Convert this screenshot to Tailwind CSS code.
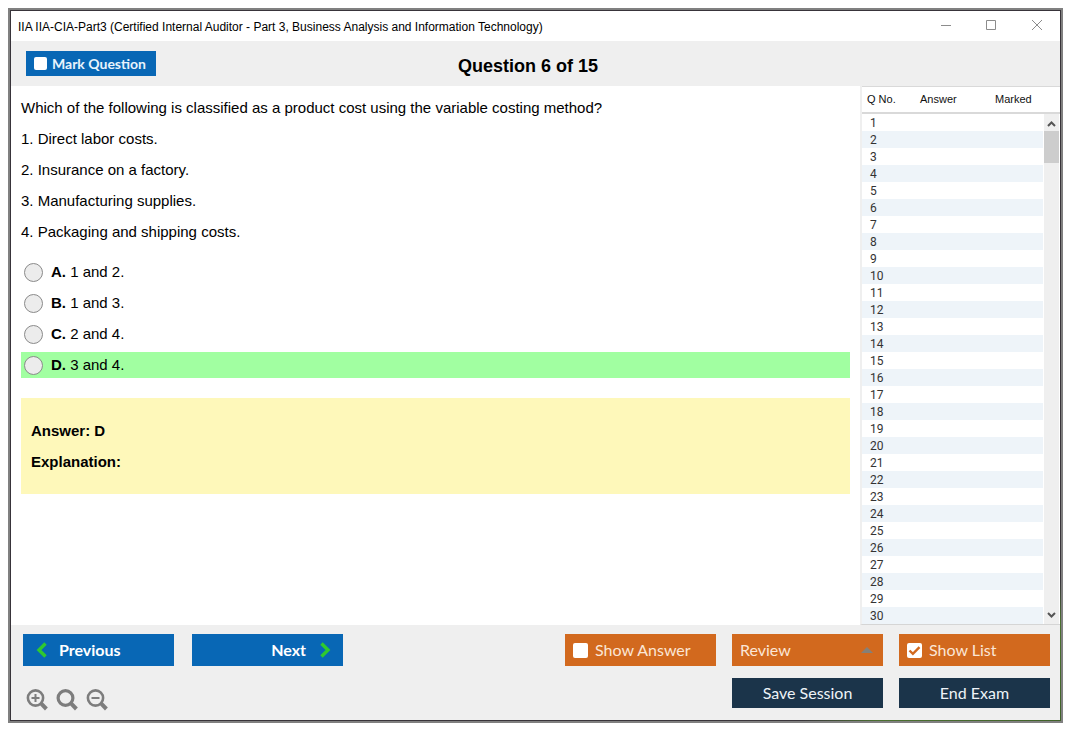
<!DOCTYPE html>
<html lang="en">
<head>
<meta charset="utf-8">
<meta name="viewport" content="width=device-width, initial-scale=1">
<title>IIA IIA-CIA-Part3</title>
<script src="https://cdn.jsdelivr.net/npm/@tailwindcss/browser@4"></script>
</head>
<body class="flex min-h-screen bg-white pt-2 pr-3 pb-3 pl-2 font-['Liberation_Sans',Arial,sans-serif] text-black">
<div class="flex flex-1 border-2 border-[#808080] bg-[radial-gradient(ellipse_260px_140px_at_bottom_right,#3f6128,#4b7030_70%,#38343a)] p-px">
<div class="flex min-w-0 flex-1 flex-col bg-white">

  <header class="flex h-[30px] items-center justify-between pl-[7px]">
    <h1 class="pt-px text-[12px] leading-4">IIA IIA-CIA-Part3 (Certified Internal Auditor - Part 3, Business Analysis and Information Technology)</h1>
    <div class="flex text-[#8c8c8c]">
      <button type="button" aria-label="Minimize" class="flex h-[28px] w-[46px] items-center justify-center"><svg width="12" height="12" viewBox="0 0 12 12" stroke="currentColor" fill="none"><path d="M1 5.500h10"/></svg></button>
      <button type="button" aria-label="Maximize" class="flex h-[28px] w-[45px] items-center justify-center"><svg width="12" height="12" viewBox="0 0 12 12" stroke="currentColor" fill="none"><path d="M.5.5h9v9h-9z"/></svg></button>
      <button type="button" aria-label="Close" class="flex h-[28px] w-[46px] items-center justify-center"><svg width="12" height="12" viewBox="0 0 12 12" stroke="currentColor" fill="none"><path d="M1 0l10 10M11 0L1 10"/></svg></button>
    </div>
  </header>

  <div class="grid h-[45px] grid-cols-[1fr_auto_1fr] items-center bg-[#efefef] pl-[15px]">
    <label class="flex h-[25px] w-[130px] items-center gap-[5px] justify-self-start bg-[#0867b5] pl-2 font-['Lato',sans-serif] text-[14px] font-bold text-[#e8f3fc]">
      <input type="checkbox" class="size-[13px] appearance-none rounded-[2px] bg-white"><span class="pt-px leading-5">Mark Question</span>
    </label>
    <h2 class="pt-1 pr-[30px] text-[18px] leading-6 font-bold">Question 6 of 15</h2>
  </div>

  <main class="flex flex-1">
    <section class="flex-1 px-[10px] pt-3 text-[15px] leading-5">
      <div class="flex flex-col gap-[11px]">
        <p>Which of the following is classified as a product cost using the variable costing method?</p>
        <p>1. Direct labor costs.</p>
        <p>2. Insurance on a factory.</p>
        <p>3. Manufacturing supplies.</p>
        <p>4. Packaging and shipping costs.</p>
      </div>
      <div role="radiogroup" aria-label="Answers" class="mt-[17px] flex flex-col gap-[5px]">
        <label class="flex h-[26px] items-center gap-2 pl-[3px]"><input type="radio" name="answer" class="size-[19px] appearance-none rounded-full border border-[#8a8a8a] bg-[#ececec]"><span><b>A.</b> 1 and 2.</span></label>
        <label class="flex h-[26px] items-center gap-2 pl-[3px]"><input type="radio" name="answer" class="size-[19px] appearance-none rounded-full border border-[#8a8a8a] bg-[#ececec]"><span><b>B.</b> 1 and 3.</span></label>
        <label class="flex h-[26px] items-center gap-2 pl-[3px]"><input type="radio" name="answer" class="size-[19px] appearance-none rounded-full border border-[#8a8a8a] bg-[#ececec]"><span><b>C.</b> 2 and 4.</span></label>
        <label class="flex h-[26px] items-center gap-2 bg-[#a1ffa1] pl-[3px]"><input type="radio" name="answer" class="size-[19px] appearance-none rounded-full border border-[#8a8a8a] bg-[#ececec]"><span><b>D.</b> 3 and 4.</span></label>
      </div>
      <div class="mt-5 flex h-24 flex-col gap-[11px] bg-[#fef8ba] px-[10px] pt-[23px] font-bold">
        <p>Answer: D</p>
        <p>Explanation:</p>
      </div>
    </section>

    <aside class="relative w-[200px] border-b border-l-2 border-b-[#d5d5d5] border-l-[#efefef]">
      <table class="w-full table-fixed border-collapse text-left text-[11px] text-[#111]">
        <thead>
          <tr class="h-[26px] border-t border-b-2 border-[#d9d9d9]">
            <th class="w-[58px] pl-[5px] font-normal">Q No.</th>
            <th class="w-[75px] font-normal">Answer</th>
            <th class="font-normal">Marked</th>
          </tr>
        </thead>
        <tbody id="rows" class="font-['Roboto',sans-serif] text-[12px] leading-[15px] text-[#333]"></tbody>
      </table>
      <div class="absolute top-[28px] right-0 bottom-0 flex w-[17px] flex-col items-center border-r border-l border-white bg-[#efefef] text-[#555]" aria-hidden="true">
        <svg class="h-[17px]" width="9" height="17" viewBox="0 0 9 17" fill="none" stroke="currentColor" stroke-width="2"><path d="M1 12l3.500-3.500L8 12"/></svg>
        <div class="h-[32px] w-full bg-[#cdcdcd]"></div>
        <svg class="mt-auto h-4" width="9" height="16" viewBox="0 0 9 16" fill="none" stroke="currentColor" stroke-width="2"><path d="M1 5l3.500 3.500L8 5"/></svg>
      </div>
    </aside>
  </main>

  <footer class="flex justify-between bg-[#efefef] pt-[9px] pr-[10px] pb-[9px] pl-3 font-['Lato',sans-serif] text-[16px]">
    <div class="flex flex-col gap-[23px]">
      <div class="flex gap-[18px] font-bold text-white">
        <button type="button" class="flex h-8 w-[151px] items-center gap-[11px] bg-[#0867b5] pl-[13px]">
          <svg width="12" height="16" viewBox="0 0 12 16" fill="none" stroke="#2fc92f" stroke-width="3.400"><path d="M9.500 1.500L3 8l6.500 6.500"/></svg>Previous
        </button>
        <button type="button" class="flex h-8 w-[151px] items-center justify-end gap-[13px] bg-[#0867b5] pr-3">
          Next<svg width="12" height="16" viewBox="0 0 12 16" fill="none" stroke="#2fc92f" stroke-width="3.400"><path d="M2.500 1.500L9 8l-6.500 6.500"/></svg>
        </button>
      </div>
      <div class="flex h-[22px] gap-2 pl-[3px] text-[#7d7d7d]">
        <button type="button" aria-label="Zoom in"><svg width="22" height="22" viewBox="0 0 22 22" fill="none" stroke="currentColor"><circle cx="9.500" cy="9" r="7.600" stroke-width="2.600"/><path d="M14.800 14.200l5.600 5.800" stroke-width="4"/><path d="M5.500 9h8M9.500 5v8" stroke-width="2"/></svg></button>
        <button type="button" aria-label="Reset zoom"><svg width="22" height="22" viewBox="0 0 22 22" fill="none" stroke="currentColor"><circle cx="9.500" cy="9" r="7.400" stroke-width="3.200"/><path d="M14.800 14.200l5.600 5.800" stroke-width="4"/></svg></button>
        <button type="button" aria-label="Zoom out"><svg width="22" height="22" viewBox="0 0 22 22" fill="none" stroke="currentColor"><circle cx="9.500" cy="9" r="7.600" stroke-width="2.600"/><path d="M14.800 14.200l5.600 5.800" stroke-width="4"/><path d="M5.500 9h8" stroke-width="2"/></svg></button>
      </div>
    </div>
    <div class="grid grid-cols-[151px_151px_151px] content-start gap-x-4 gap-y-3 text-[#fbe6d6]">
      <label class="flex h-8 items-center gap-[7px] bg-[#d2691e] pl-2"><input type="checkbox" class="size-[15px] appearance-none rounded-[2px] bg-white">Show Answer</label>
      <button type="button" aria-haspopup="menu" class="flex h-8 items-center justify-between bg-[#d2691e] pr-[10px] pl-2">Review<svg width="12" height="6" viewBox="0 0 12 6" fill="#858078"><path d="M0 6l6-6 6 6z"/></svg></button>
      <label class="flex h-8 items-center gap-[7px] bg-[#d2691e] pl-2">
        <span class="grid size-[15px]">
          <input type="checkbox" checked class="col-start-1 row-start-1 size-[15px] appearance-none rounded-[2px] bg-white">
          <svg class="pointer-events-none col-start-1 row-start-1" width="15" height="15" viewBox="0 0 15 15" fill="none" stroke="#d2691e" stroke-width="2.400"><path d="M2.500 7.500l3.400 3.300 6.600-6.600"/></svg>
        </span>Show List</label>
      <button type="button" class="col-start-2 h-[30px] bg-[#1b344a] text-[#eef3f7]">Save Session</button>
      <button type="button" class="h-[30px] bg-[#1b344a] text-[#eef3f7]">End Exam</button>
    </div>
  </footer>
</div>
</div>
<script>
  const body = document.getElementById('rows');
  for (let n = 1; n <= 30; n++) {
    const tr = document.createElement('tr');
    tr.className = 'h-[17px] even:bg-[#eef4f9]';
    tr.innerHTML = '<td class="pt-0.5 pl-2">' + n + '</td><td></td><td></td>';
    body.append(tr);
  }
</script>
</body>
</html>
